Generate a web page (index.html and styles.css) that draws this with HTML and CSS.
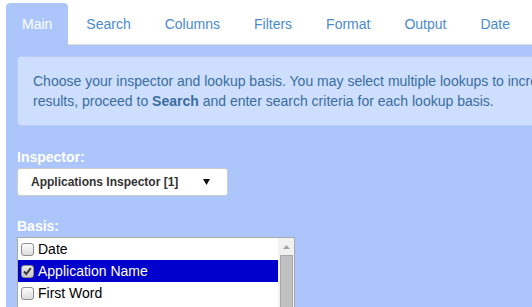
FILE: index.html
```html
<!DOCTYPE html>
<html>

<head>
    <title>Lookup - Main</title>
    <link rel="stylesheet" href="styles.css">
</head>

<body>
    <div class="page">
        <ul class="tabs">
            <li class="active"><a>Main</a></li>
            <li><a>Search</a></li>
            <li><a>Columns</a></li>
            <li><a>Filters</a></li>
            <li><a>Format</a></li>
            <li><a>Output</a></li>
            <li><a>Date</a></li>
        </ul>
        <div class="pane">
            <div class="alert">
                Choose your inspector and lookup basis. You may select multiple lookups to increase the range of your<br>
                results, proceed to <b>Search</b> and enter search criteria for each lookup basis.
            </div>

            <label class="field-label">Inspector:</label>
            <div class="select">
                <span>Applications Inspector [1]</span>
                <svg width="7" height="6" viewBox="0 0 7 6"><path d="M0 0H7L3.5 6Z" fill="#111"/></svg>
            </div>

            <label class="field-label">Basis:</label>
            <div class="listbox">
                <div class="options">
                    <div class="option"><span class="check"></span>Date</div>
                    <div class="option selected">
                        <span class="check checked">
                            <svg width="11" height="11" viewBox="0 0 11 11"><path d="M2 5.5L4.3 8L8.8 2.2" stroke="#3a3a3a" stroke-width="2" fill="none"/></svg>
                        </span>Application Name
                    </div>
                    <div class="option"><span class="check"></span>First Word</div>
                    <div class="option"><span class="check"></span>Last Word</div>
                </div>
                <div class="scrollbar">
                    <div class="scroll-up">
                        <svg width="7" height="4" viewBox="0 0 7 4"><path d="M0 4H7L3.5 0Z" fill="#a3a3a3"/></svg>
                    </div>
                    <div class="thumb"></div>
                </div>
            </div>
        </div>
    </div>
</body>

</html>
```

FILE: styles.css
```css
html,
body {
    margin: 0;
    overflow: hidden;
    background-color: #fff;
}

body {
    font-family: "Liberation Sans", Arial, sans-serif;
    font-size: 14px;
    line-height: 20px;
}

.page {
    width: 820px;
    padding: 3px 0 0 6px;
}

.tabs {
    display: flex;
    list-style: none;
    margin: 0;
    padding: 0;
    border-bottom: 1px solid #ddd;
}

.tabs li {
    margin-right: 2px;
    margin-bottom: -1px;
}

.tabs a {
    display: block;
    padding: 10px 15px;
    border: 1px solid transparent;
    border-radius: 4px 4px 0 0;
    color: #4a8bcc;
}

.tabs .active a {
    background-color: #acc6fc;
    border-color: #acc6fc;
    color: #fff;
}

.pane {
    background-color: #acc6fc;
    padding: 11px;
    height: 300px;
}

.alert {
    background-color: #cddefe;
    border: 1px solid #b6ccf6;
    border-radius: 4px;
    padding: 14px 15px;
    color: #3a6d9e;
    white-space: nowrap;
    margin-bottom: 21px;
}

.field-label {
    display: block;
    font-weight: bold;
    color: #fff;
    margin-bottom: 1px;
}

.select {
    box-sizing: border-box;
    width: 211px;
    height: 28px;
    display: flex;
    align-items: center;
    justify-content: space-between;
    padding: 0 17px 0 13px;
    background-color: #fff;
    border: 1px solid #ccc;
    border-radius: 3px;
    color: #333;
    font-size: 12px;
    font-weight: bold;
    margin-bottom: 20px;
}

.listbox {
    box-sizing: border-box;
    width: 278px;
    height: 120px;
    display: flex;
    background-color: #fff;
    border: 1px solid #a9a9a9;
}

.options {
    flex: 1;
}

.option {
    display: flex;
    align-items: center;
    height: 22px;
    color: #000;
}

.option.selected {
    background-color: #0000cc;
    color: #fff;
}

.check {
    box-sizing: border-box;
    width: 13px;
    height: 13px;
    margin: 0 4px 0 3px;
    border: 1px solid #8e8e8e;
    border-radius: 3px;
    background: linear-gradient(#fdfdfd, #dcdcdc);
    display: flex;
    align-items: center;
    justify-content: center;
}

.check.checked {
    background: linear-gradient(#e6e6e6, #c9c9c9);
}

.scrollbar {
    width: 16px;
    background-color: #f1f1f1;
    display: flex;
    flex-direction: column;
}

.scroll-up {
    height: 17px;
    display: flex;
    align-items: center;
    justify-content: center;
}

.thumb {
    flex: 1;
    margin: 0 1px 0 2px;
    background-color: #c1c1c1;
    border: 1px solid #a8a8a8;
}
```
